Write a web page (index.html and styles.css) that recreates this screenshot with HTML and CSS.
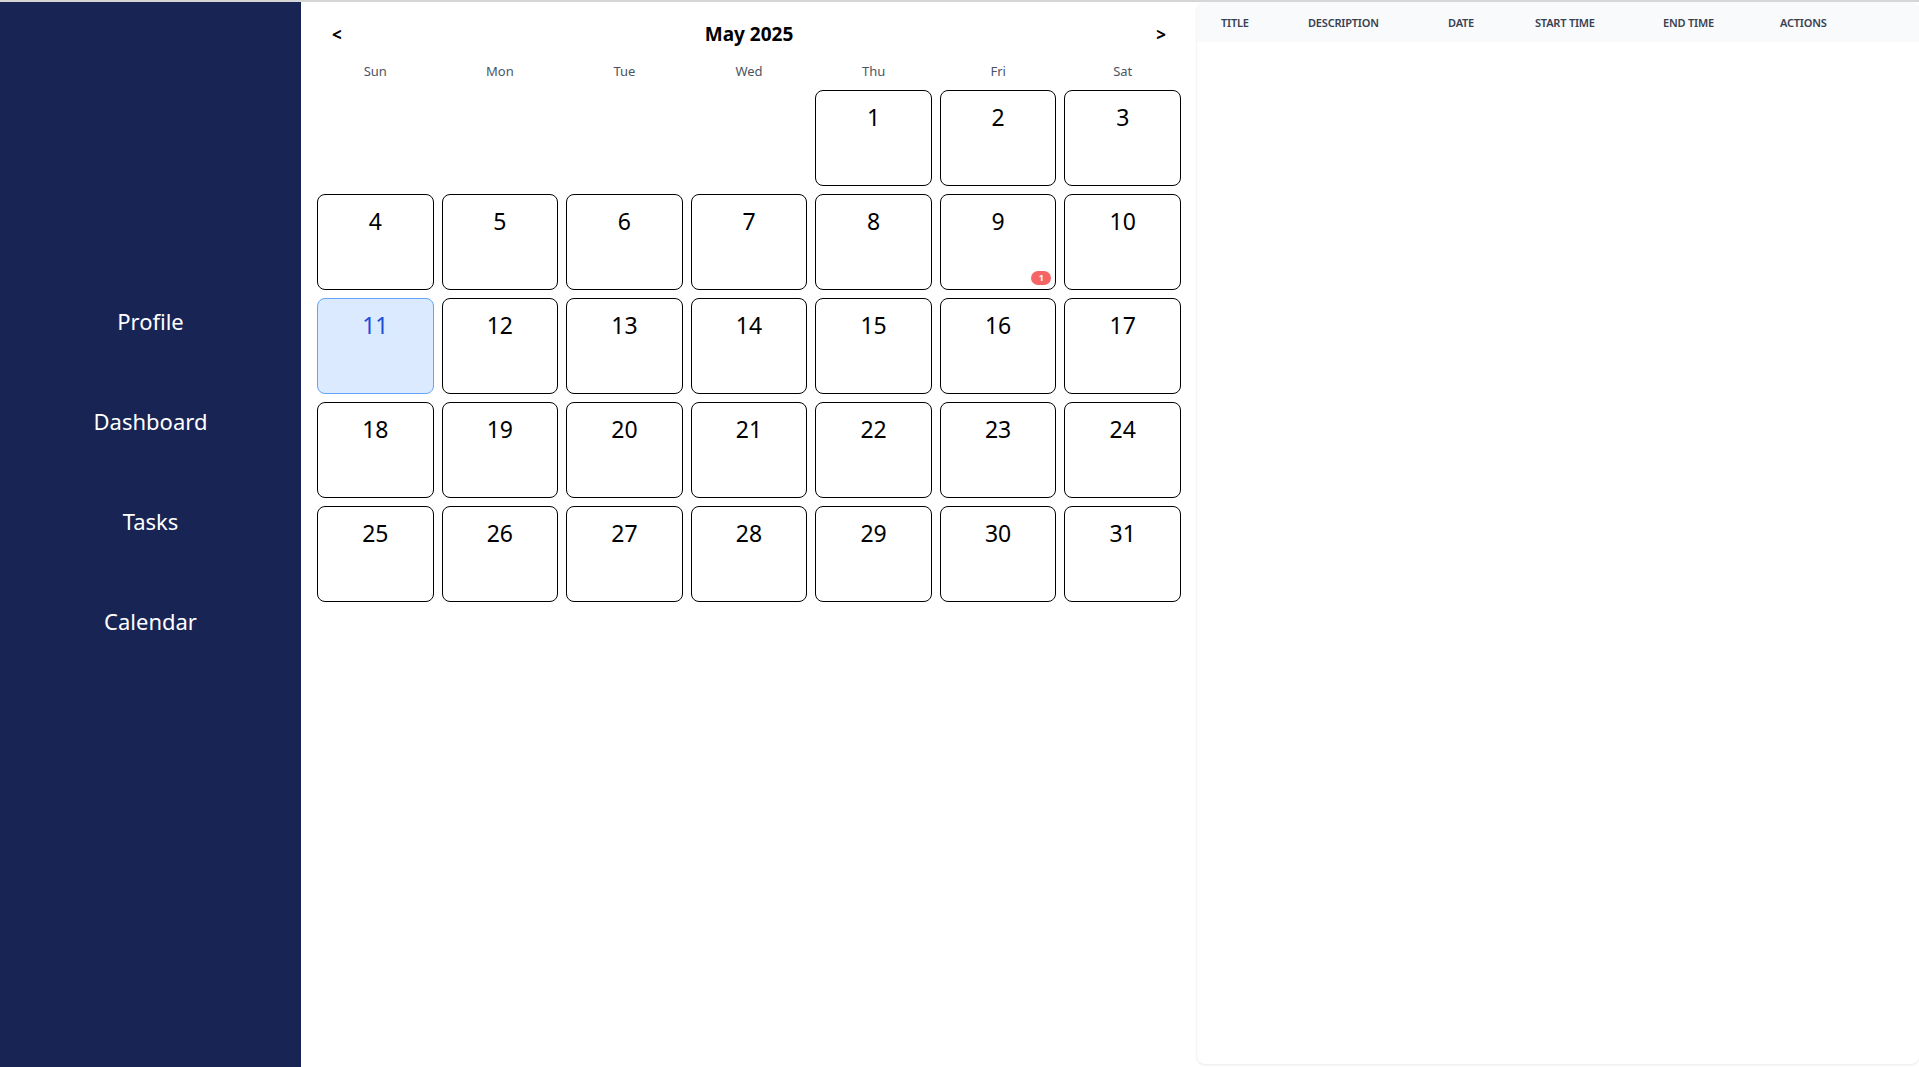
FILE: index.html
```html
<!DOCTYPE html>
<html lang="en">
<head>
<meta charset="utf-8">
<title>Calendar</title>
<link rel="stylesheet" href="styles.css">
</head>
<body>
<div class="app">
  <aside class="sidebar">
    <nav class="nav">
      <a class="nav-link" href="#">Profile</a>
      <a class="nav-link" href="#">Dashboard</a>
      <a class="nav-link" href="#">Tasks</a>
      <a class="nav-link" href="#">Calendar</a>
    </nav>
  </aside>
  <main class="calendar">
    <div class="cal-header">
      <button class="nav-btn">&lt;</button>
      <h2 class="cal-title">May 2025</h2>
      <button class="nav-btn">&gt;</button>
    </div>
    <div class="weekdays">
      <div>Sun</div><div>Mon</div><div>Tue</div><div>Wed</div><div>Thu</div><div>Fri</div><div>Sat</div>
    </div>
    <div class="days">
      <div class="empty"></div><div class="empty"></div><div class="empty"></div><div class="empty"></div>
      <div class="day">1</div><div class="day">2</div><div class="day">3</div>
      <div class="day">4</div><div class="day">5</div><div class="day">6</div><div class="day">7</div><div class="day">8</div>
      <div class="day">9<span class="badge">1</span></div><div class="day">10</div>
      <div class="day today">11</div><div class="day">12</div><div class="day">13</div><div class="day">14</div><div class="day">15</div><div class="day">16</div><div class="day">17</div>
      <div class="day">18</div><div class="day">19</div><div class="day">20</div><div class="day">21</div><div class="day">22</div><div class="day">23</div><div class="day">24</div>
      <div class="day">25</div><div class="day">26</div><div class="day">27</div><div class="day">28</div><div class="day">29</div><div class="day">30</div><div class="day">31</div>
    </div>
  </main>
  <section class="panel">
    <table class="tasks">
      <thead>
        <tr>
          <th class="c-title">Title</th>
          <th class="c-desc">Description</th>
          <th class="c-date">Date</th>
          <th class="c-start">Start Time</th>
          <th class="c-end">End Time</th>
          <th class="c-actions">Actions</th>
        </tr>
      </thead>
      <tbody></tbody>
    </table>
  </section>
</div>
</body>
</html>
```

FILE: styles.css
```css
* { box-sizing: border-box; }

html, body {
  margin: 0;
  padding: 0;
  background: #ffffff;
}

body {
  font-family: "Noto Sans", "Open Sans", sans-serif;
  border-top: 2px solid #d6d6d6;
  height: 100vh;
  overflow: hidden;
}

.app {
  display: flex;
  height: calc(100vh - 2px);
}

/* Sidebar */
.sidebar {
  width: 301px;
  flex: 0 0 301px;
  background: #182454;
}

.nav {
  display: flex;
  flex-direction: column;
  align-items: center;
  padding-top: 269px;
}

.nav-link {
  display: block;
  height: 100px;
  line-height: 100px;
  color: #ffffff;
  text-decoration: none;
  font-size: 22px;
}

/* Calendar */
.calendar {
  width: 896px;
  flex: 0 0 896px;
  padding: 16px;
}

.cal-header {
  display: flex;
  align-items: center;
  justify-content: space-between;
  height: 32px;
}

.nav-btn {
  background: none;
  border: none;
  font-family: inherit;
  font-size: 17px;
  font-weight: 700;
  color: #000;
  padding: 0 15px 0 15px;
  cursor: pointer;
}

.cal-title {
  margin: 0;
  font-size: 19px;
  font-weight: 700;
  color: #000;
}

.weekdays {
  display: grid;
  grid-template-columns: repeat(7, 1fr);
  column-gap: 8px;
  margin-top: 11px;
  height: 20px;
  line-height: 20px;
  text-align: center;
  font-size: 13px;
  color: #4b5563;
}

.days {
  display: grid;
  grid-template-columns: repeat(7, 1fr);
  grid-auto-rows: 96px;
  gap: 8px;
  margin-top: 9px;
}

.day {
  position: relative;
  border: 1px solid #000;
  border-radius: 8px;
  text-align: center;
  font-size: 23px;
  line-height: 32px;
  padding-top: 10px;
  color: #000;
}

.day.today {
  background: #dbeafe;
  border-color: #60a5fa;
  color: #1d4ed8;
}

.badge {
  position: absolute;
  right: 4px;
  bottom: 4px;
  width: 20px;
  height: 14px;
  border-radius: 7px;
  background: #f56565;
  color: #fff;
  font-size: 9px;
  font-weight: 700;
  line-height: 14px;
  text-align: center;
}

/* Table panel */
.panel {
  flex: 1;
  margin: 1px 0 3px 0;
  background: #ffffff;
  border-radius: 8px;
  box-shadow: 0 1px 3px rgba(0, 0, 0, 0.08), 0 0 2px rgba(0, 0, 0, 0.05);
  overflow: hidden;
}

.tasks {
  border-collapse: collapse;
  table-layout: fixed;
  width: 100%;
}

.tasks thead tr {
  background: #f9fafb;
}

.tasks th {
  height: 39px;
  padding: 0 0 1px 24px;
  text-align: left;
  font-size: 11px;
  font-weight: 600;
  text-transform: uppercase;
  color: #374151;
  letter-spacing: -0.2px;
  white-space: nowrap;
}

.c-title { width: 87px; }
.c-desc { width: 140px; }
.c-date { width: 87px; }
.c-start { width: 128px; }
.c-end { width: 117px; }
```
